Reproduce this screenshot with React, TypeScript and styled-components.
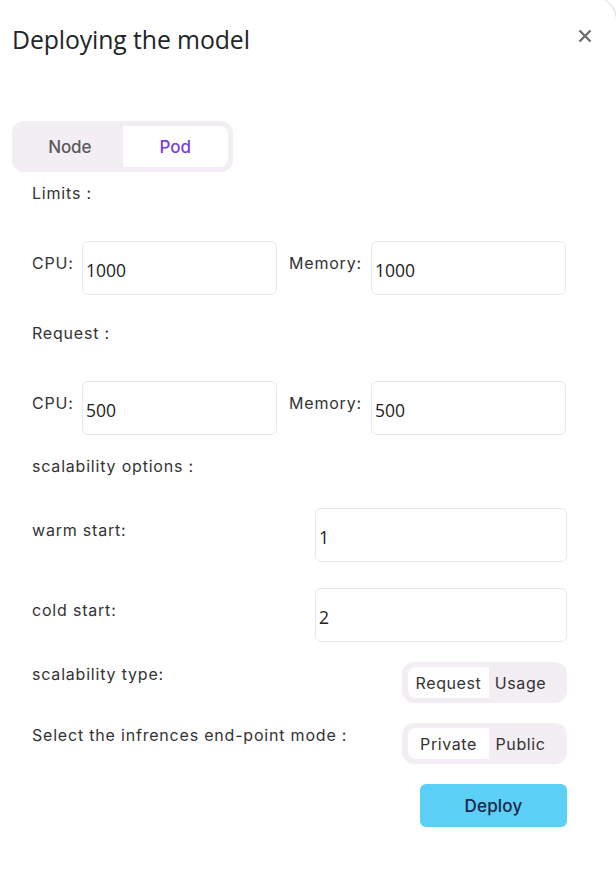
import React, { useState } from "react";
import styled, { createGlobalStyle } from "styled-components";

const Global = createGlobalStyle`
  html, body { margin: 0; padding: 0; background: #ffffff; }
  body { overflow: hidden; }
  * { box-sizing: border-box; }
`;

const Card = styled.div`
  position: relative;
  width: 620px;
  height: 880px;
  margin-top: -4px;
  margin-left: -3px;
  background: #ffffff;
  border: 1px solid #d6d6d6;
  border-top-right-radius: 24px;
  overflow: hidden;
`;

const Header = styled.div`
  display: flex;
  align-items: center;
  justify-content: space-between;
  padding: 19px 23px 0 14px;
  height: 64px;
`;

const Title = styled.h2`
  margin: 0;
  font-family: "Open Sans", "Liberation Sans", sans-serif;
  font-weight: 400;
  font-size: 24.8px;
  line-height: 32px;
  letter-spacing: -0.1px;
  color: #212529;
`;

const CloseButton = styled.button`
  border: none;
  background: transparent;
  padding: 0;
  width: 16px;
  height: 16px;
  margin-top: -6px;
  display: flex;
  align-items: center;
  justify-content: center;
  cursor: pointer;
`;

const Body = styled.div`
  display: flex;
  flex-direction: column;
  padding: 0 0 0 34px;
  width: 569px;
`;

const Tabs = styled.div`
  display: flex;
  align-self: flex-start;
  margin-left: -20px;
  margin-top: 60px;
  width: 221px;
  height: 51px;
  padding: 5px;
  background: #f2eef4;
  border-radius: 12px;
`;

const Tab = styled.button<{ $active?: boolean }>`
  flex: 1;
  border: none;
  margin: 0;
  padding: 1px 0 0 0;
  font-family: "Inter", "Lato", sans-serif;
  font-weight: 450;
  font-size: 17px;
  letter-spacing: -0.1px;
  color: ${(p) => (p.$active ? "#7a3ee6" : "#5a5a5a")};
  background: ${(p) => (p.$active ? "#ffffff" : "transparent")};
  border-radius: ${(p) => (p.$active ? "0 8px 8px 0" : "8px")};
  cursor: pointer;
`;

const Heading = styled.div<{ $mt: number }>`
  margin-top: ${(p) => p.$mt}px;
  font-family: "Inter", "Lato", sans-serif;
  font-size: 16px;
  letter-spacing: 0.8px;
  line-height: 20px;
  color: #333333;
`;

const Row = styled.div<{ $mt: number }>`
  display: flex;
  align-items: flex-start;
  margin-top: ${(p) => p.$mt}px;
`;

const SplitRow = styled(Row)`
  justify-content: space-between;
`;

const FieldLabel = styled.label<{ $pt?: number; $w?: number; $ml?: number }>`
  font-family: "Inter", "Lato", sans-serif;
  font-size: 16px;
  letter-spacing: 0.8px;
  line-height: 20px;
  color: #333333;
  padding-top: ${(p) => p.$pt ?? 12}px;
  margin-left: ${(p) => p.$ml ?? 0}px;
  ${(p) => (p.$w ? `width: ${p.$w}px;` : "")}
  white-space: nowrap;
`;

const Input = styled.input<{ $w: number }>`
  width: ${(p) => p.$w}px;
  height: 54px;
  border: 1px solid #e8e6f0;
  border-radius: 6px;
  padding: 4px 4px 0 3px;
  font-family: "Open Sans", "Liberation Sans", sans-serif;
  font-size: 17.5px;
  color: #222222;
  background: #ffffff;
  outline: none;
`;

const Toggle = styled.div`
  display: flex;
  width: 165px;
  height: 41px;
  padding: 5px 0 5px 6px;
  background: #f2eef4;
  border-radius: 12px;
`;

const ToggleOption = styled.button<{ $active?: boolean }>`
  border: none;
  margin: 0;
  padding: 0;
  width: ${(p) => (p.$active ? "81px" : "63px")};
  font-family: "Inter", "Lato", sans-serif;
  font-size: 16px;
  letter-spacing: 0.6px;
  color: #333333;
  background: ${(p) => (p.$active ? "#ffffff" : "transparent")};
  border-radius: 8px 0 0 8px;
  cursor: pointer;
`;

const DeployButton = styled.button`
  align-self: flex-end;
  margin-top: 20px;
  width: 147px;
  height: 43px;
  border: none;
  border-radius: 6px;
  background: #5bcff6;
  font-family: "Inter", "Lato", sans-serif;
  font-weight: 450;
  font-size: 17px;
  letter-spacing: 0.2px;
  color: #1d2647;
  cursor: pointer;
`;

function CloseIcon() {
  return (
    <svg width="14" height="14" viewBox="0 0 14 14">
      <path d="M1.5 1.5 L12.5 12.5 M12.5 1.5 L1.5 12.5" stroke="#6f6f6f" strokeWidth="2.4" strokeLinecap="butt" />
    </svg>
  );
}

export default function App() {
  const [mode, setMode] = useState("Pod");
  const [scale, setScale] = useState("Request");
  const [endpoint, setEndpoint] = useState("Private");
  return (
    <>
      <Global />
      <Card>
        <Header>
          <Title>Deploying the model</Title>
          <CloseButton aria-label="close">
            <CloseIcon />
          </CloseButton>
        </Header>
        <Body>
          <Tabs>
            {["Node", "Pod"].map((t) => (
              <Tab key={t} $active={mode === t} onClick={() => setMode(t)}>
                {t}
              </Tab>
            ))}
          </Tabs>
          <Heading $mt={11}>Limits :</Heading>
          <Row $mt={38}>
            <FieldLabel $w={50}>CPU:</FieldLabel>
            <Input $w={195} defaultValue="1000" />
            <FieldLabel $w={82} $ml={12}>Memory:</FieldLabel>
            <Input $w={195} defaultValue="1000" />
          </Row>
          <Heading $mt={28}>Request :</Heading>
          <Row $mt={38}>
            <FieldLabel $w={50}>CPU:</FieldLabel>
            <Input $w={195} defaultValue="500" />
            <FieldLabel $w={82} $ml={12}>Memory:</FieldLabel>
            <Input $w={195} defaultValue="500" />
          </Row>
          <Heading $mt={21}>scalability options :</Heading>
          <SplitRow $mt={32}>
            <FieldLabel>warm start:</FieldLabel>
            <Input $w={252} defaultValue="1" />
          </SplitRow>
          <SplitRow $mt={26}>
            <FieldLabel>cold start:</FieldLabel>
            <Input $w={252} defaultValue="2" />
          </SplitRow>
          <SplitRow $mt={20}>
            <FieldLabel $pt={2}>scalability type:</FieldLabel>
            <Toggle>
              {["Request", "Usage"].map((t) => (
                <ToggleOption key={t} $active={scale === t} onClick={() => setScale(t)}>
                  {t}
                </ToggleOption>
              ))}
            </Toggle>
          </SplitRow>
          <SplitRow $mt={20}>
            <FieldLabel $pt={2}>Select the infrences end-point mode :</FieldLabel>
            <Toggle>
              {["Private", "Public"].map((t) => (
                <ToggleOption key={t} $active={endpoint === t} onClick={() => setEndpoint(t)}>
                  {t}
                </ToggleOption>
              ))}
            </Toggle>
          </SplitRow>
          <DeployButton>Deploy</DeployButton>
        </Body>
      </Card>
    </>
  );
}
